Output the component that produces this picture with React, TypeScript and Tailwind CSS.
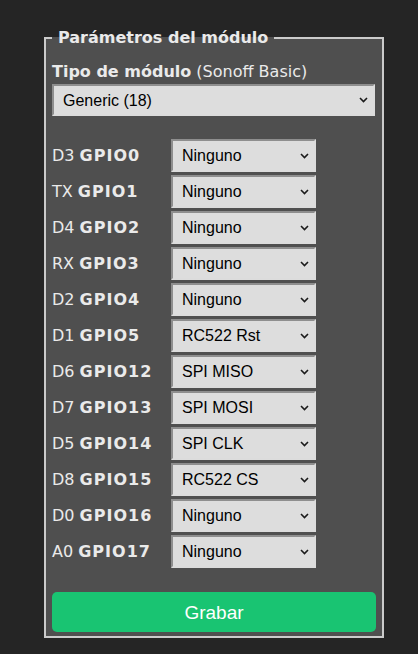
import React from 'react';

const pins = [
  { pin: 'D3', gpio: 'GPIO0', value: 'Ninguno' },
  { pin: 'TX', gpio: 'GPIO1', value: 'Ninguno' },
  { pin: 'D4', gpio: 'GPIO2', value: 'Ninguno' },
  { pin: 'RX', gpio: 'GPIO3', value: 'Ninguno' },
  { pin: 'D2', gpio: 'GPIO4', value: 'Ninguno' },
  { pin: 'D1', gpio: 'GPIO5', value: 'RC522 Rst' },
  { pin: 'D6', gpio: 'GPIO12', value: 'SPI MISO' },
  { pin: 'D7', gpio: 'GPIO13', value: 'SPI MOSI' },
  { pin: 'D5', gpio: 'GPIO14', value: 'SPI CLK' },
  { pin: 'D8', gpio: 'GPIO15', value: 'RC522 CS' },
  { pin: 'D0', gpio: 'GPIO16', value: 'Ninguno' },
  { pin: 'A0', gpio: 'GPIO17', value: 'Ninguno' },
];

function Chevron() {
  return (
    <svg width="9" height="6" viewBox="0 0 9 6" className="shrink-0">
      <path d="M1 1 L4.5 4.5 L8 1" fill="none" stroke="#1a1a1a" strokeWidth="1.6" />
    </svg>
  );
}

function FakeSelect({ value, className }: { value: string; className?: string }) {
  return (
    <div
      className={
        'flex items-center justify-between border-2 border-t-[#8e8e8e] border-l-[#8e8e8e] border-r-[#dcdcdc] border-b-[#dcdcdc] bg-[#dddddd] pl-[9px] pr-[5px] font-["Liberation_Sans",Arial,sans-serif] text-[16px] text-black ' +
        (className ?? '')
      }
    >
      <span>{value}</span>
      <Chevron />
    </div>
  );
}

export default function App() {
  return (
    <div className="min-h-[654px] bg-[#252525] pt-[28px] font-['DejaVu_Sans',Verdana,sans-serif] text-[16px] leading-[19px] text-[#eaeaea]">
      <fieldset className="ml-[44px] w-[338px] border-2 border-[#cbcbcb] bg-[#4f4f4f] px-[6px] pt-[15px] pb-[4px]">
        <legend className="px-[6px] font-bold">Parámetros del módulo</legend>

        {/* Module type */}
        <div>
          <b>Tipo de módulo</b> (Sonoff Basic)
        </div>
        <FakeSelect value="Generic (18)" className="mt-[3px] h-[32px] w-[323px]" />

        {/* GPIO rows */}
        <div className="mt-[23px] flex flex-col gap-[3px]">
          {pins.map(p => (
            <div key={p.gpio} className="flex items-center">
              <div className="w-[119px] shrink-0">
                {p.pin} <b className="tracking-[1px]">{p.gpio}</b>
              </div>
              <FakeSelect value={p.value} className="h-[33px] w-[145px]" />
            </div>
          ))}
        </div>

        <button className="mt-[24px] h-[40px] w-[324px] rounded-[5px] bg-[#19c472] font-['Liberation_Sans',Arial,sans-serif] text-[19px] text-white">
          Grabar
        </button>
      </fieldset>
    </div>
  );
}
